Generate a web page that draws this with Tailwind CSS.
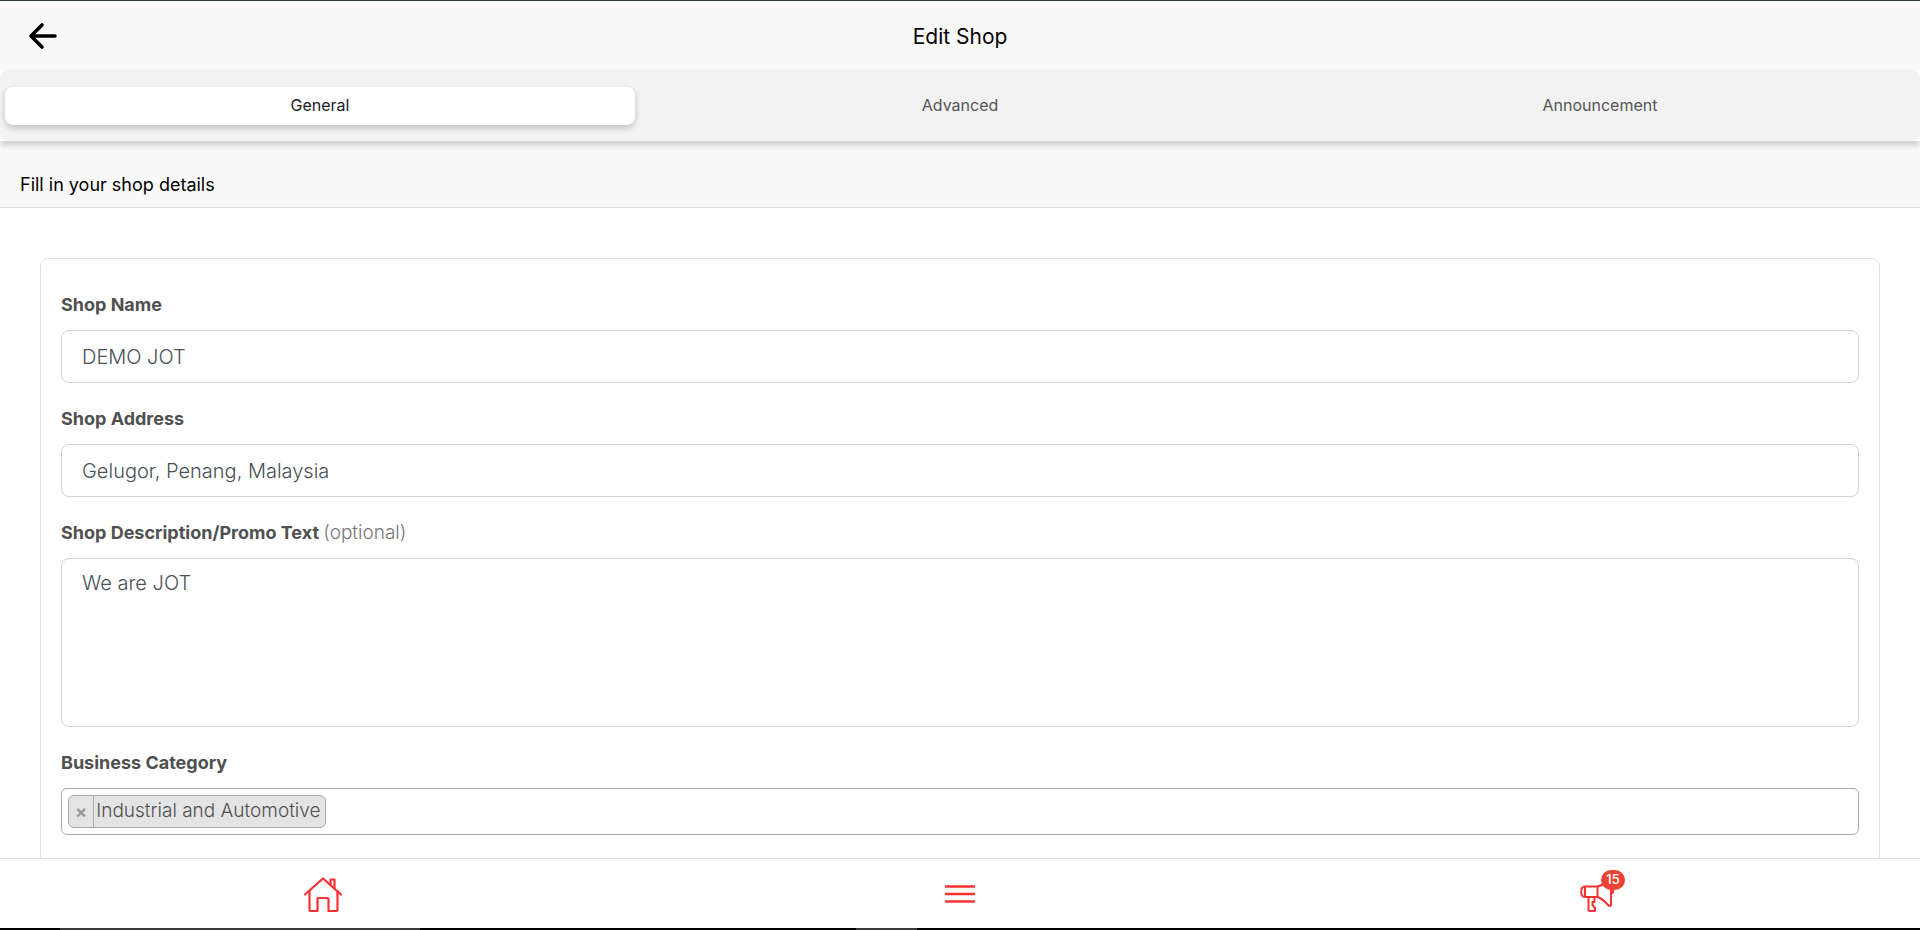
<!DOCTYPE html>
<html lang="en">
  <head>
    <meta charset="UTF-8" />
    <meta name="viewport" content="width=device-width, initial-scale=1.0" />
    <script src="https://cdn.jsdelivr.net/npm/@tailwindcss/browser@4"></script>
    <title>Edit Shop</title>
  </head>
  <body class="bg-white h-screen flex flex-col overflow-hidden font-['Inter',sans-serif] text-black">
    <div class="h-px shrink-0 bg-[#2f3d2f]"></div>

    <!-- Header -->
    <header class="relative flex h-[69px] shrink-0 items-center justify-center bg-[#f9f9f9] pt-0.5">
      <a href="#" aria-label="Back" class="absolute left-7 top-5">
        <svg class="size-[30px]" viewBox="0 0 30 30" fill="none" stroke="#000" stroke-width="3.600" stroke-linecap="round" stroke-linejoin="round">
          <path d="M14 4 L3 15 L14 26 M3 15 H27" />
        </svg>
      </a>
      <h1 class="text-[21px]">Edit Shop</h1>
    </header>

    <!-- Tabs -->
    <div class="relative z-10 shrink-0 bg-white shadow-[0_4px_6px_rgba(0,0,0,0.18)]">
      <div class="flex h-[71px] items-center rounded-lg bg-[#f2f2f2] text-base" role="tablist">
        <div class="flex-1 px-[5px]">
          <button type="button" role="tab" aria-selected="true" class="h-[38px] w-full rounded-lg bg-white pb-0.5 text-[#212121] shadow-[0_3px_6px_rgba(0,0,0,0.2)]">General</button>
        </div>
        <div class="flex-1 px-[5px]">
          <button type="button" role="tab" class="h-[38px] w-full pb-0.5 text-[#555]">Advanced</button>
        </div>
        <div class="flex-1 px-[5px]">
          <button type="button" role="tab" class="h-[38px] w-full pb-0.5 text-[#555]">Announcement</button>
        </div>
      </div>
    </div>

    <div class="shrink-0 border-b border-[#dfdfdf] bg-[#f9f9f9] px-5 pt-[30px] pb-2">
      <h2 class="text-lg">Fill in your shop details</h2>
    </div>

    <!-- Form -->
    <main class="min-h-0 flex-1 overflow-hidden px-10 pt-[50px]">
      <form class="rounded-lg border border-[#dee2e6] px-5 pt-8 pb-8 text-[#4f5050]">
        <div class="mb-[22px]">
          <label for="shopName" class="mb-[11px] block text-lg font-bold">Shop Name</label>
          <input id="shopName" type="text" value="DEMO JOT" class="block h-[53px] w-full rounded-lg border border-[#ced0da] px-5 text-xl font-light text-[#495057]" />
        </div>
        <div class="mb-[22px]">
          <label for="shopAddress" class="mb-[11px] block text-lg font-bold">Shop Address</label>
          <input id="shopAddress" type="text" value="Gelugor, Penang, Malaysia" class="block h-[53px] w-full rounded-lg border border-[#ced0da] px-5 text-xl font-light text-[#495057]" />
        </div>
        <div class="mb-[22px]">
          <label for="shopDesc" class="mb-[11px] block text-lg font-bold">Shop Description/Promo Text <span class="text-[19px] leading-none font-light text-[#777]">(optional)</span></label>
          <textarea id="shopDesc" class="block h-[169px] w-full resize-none rounded-lg border border-[#ced0da] px-5 py-2.5 text-xl font-light text-[#495057]">We are JOT</textarea>
        </div>
        <div>
          <label for="category" class="mb-[11px] block text-lg font-bold">Business Category</label>
          <div class="flex h-[47px] items-center rounded-md border border-[#aaa] px-1.5">
            <div class="flex h-[33px] items-center rounded-md border border-[#aaa] bg-[#e4e4e4]">
              <button type="button" aria-label="Remove Industrial and Automotive" class="h-full border-r border-[#aaa] px-[6px] text-lg font-bold text-[#999]">×</button>
              <span class="pr-[5px] pl-0.5 text-[19px] font-light">Industrial and Automotive</span>
            </div>
            <input id="category" type="text" class="min-w-0 flex-1 outline-none" />
          </div>
        </div>
      </form>
    </main>

    <!-- Bottom navigation -->
    <nav class="flex h-[70px] shrink-0 items-center border-t border-[#dfdfdf] bg-white text-[#f83233]">
      <a href="#" aria-label="Home" class="flex flex-1 justify-center">
        <svg class="h-10 w-11" viewBox="0 0 44 40" fill="none" stroke="currentColor" stroke-width="2.200" stroke-linecap="round" stroke-linejoin="round">
          <path d="M7 20.500 L25 4.500 L43 20.500" />
          <path d="M11.500 17 V36 Q11.500 37 12.500 37 H19.500 V25 Q19.500 24 20.500 24 H29.500 Q30.500 24 30.500 25 V37 H38.500 Q39.500 37 39.500 36 V17" />
          <path d="M32.500 10.500 V5.500 H36.500 V14" />
        </svg>
      </a>
      <button type="button" aria-label="Menu" class="flex flex-1 justify-center">
        <svg class="h-[18px] w-[30px]" viewBox="0 0 30 18" fill="none" stroke="currentColor" stroke-width="2.400">
          <path d="M0 1.500 H30 M0 9 H30 M0 16.500 H30" />
        </svg>
      </button>
      <a href="#" aria-label="Announcements" class="flex flex-1 justify-center">
        <span class="relative block">
          <svg class="size-10" viewBox="0 0 40 40" fill="none" stroke="currentColor" stroke-width="2" stroke-linecap="round" stroke-linejoin="round">
            <path d="M5 12.500 H17.500 V23 H5 Q1.200 23 1.200 17.700 Q1.200 12.500 5 12.500 Z M5 12.500 V23" />
            <path d="M17.500 12.500 Q25 11 31 4 V31 Q30 33 28 31 Q23 25 17.500 23" />
            <path d="M8.500 23 V36 Q8.500 37 9.500 37 H15 V34 L12.500 31 V28 H14.500 V24" />
            <path d="M31 14 Q34 16 33 18.500 L31 20" />
          </svg>
          <span class="absolute -top-1 left-[21px] flex h-5 w-6 items-center justify-center rounded-full bg-[#ea4335] text-[13px] font-medium text-white">15</span>
        </span>
      </a>
    </nav>
    <div class="flex h-0.5 shrink-0 bg-black">
      <div class="ml-[60px] w-[360px] bg-[#3a3a3a]"></div>
      <div class="ml-[436px] w-[61px] bg-[#3a3a3a]"></div>
    </div>
  </body>
</html>
